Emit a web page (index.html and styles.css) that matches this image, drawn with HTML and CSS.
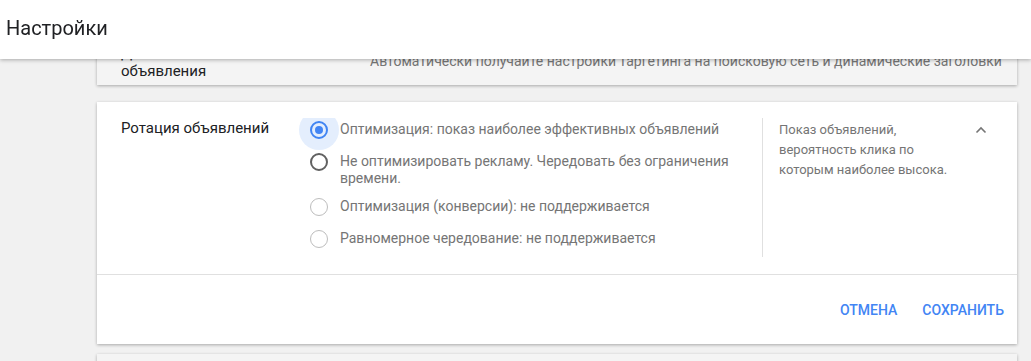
FILE: index.html
```html
<!DOCTYPE html>
<html lang="ru">
<head>
<meta charset="utf-8">
<title>Настройки</title>
<link rel="stylesheet" href="styles.css">
</head>
<body>
<header class="topbar">
  <h1 class="topbar-title">Настройки</h1>
</header>
<main class="page">
  <section class="card card-collapsed">
    <div class="collapsed-label">Динамические поисковые<br>объявления</div>
    <div class="collapsed-summary">Автоматически получайте настройки таргетинга на поисковую сеть и динамические заголовки</div>
  </section>

  <section class="card card-open">
    <div class="card-body">
      <div class="setting-label">Ротация объявлений</div>
      <div class="options">
        <label class="option">
          <span class="radio radio-checked"><span class="halo"></span><span class="dot"></span></span>
          <span class="option-text">Оптимизация: показ наиболее эффективных объявлений</span>
        </label>
        <label class="option option-multi">
          <span class="radio radio-empty"></span>
          <span class="option-text">Не оптимизировать рекламу. Чередовать без ограничения времени.</span>
        </label>
        <label class="option">
          <span class="radio radio-disabled"></span>
          <span class="option-text">Оптимизация (конверсии): не поддерживается</span>
        </label>
        <label class="option">
          <span class="radio radio-disabled"></span>
          <span class="option-text">Равномерное чередование: не поддерживается</span>
        </label>
      </div>
      <div class="help">Показ объявлений, вероятность клика по которым наиболее высока.</div>
      <button class="collapse-btn" aria-label="Свернуть">
        <svg width="24" height="24" viewBox="0 0 24 24"><polyline points="7.5,14.5 12,10 16.5,14.5" fill="none" stroke="#757575" stroke-width="1.6"/></svg>
      </button>
    </div>
    <div class="card-footer">
      <button class="text-btn">Отмена</button>
      <button class="text-btn">Сохранить</button>
    </div>
  </section>

  <section class="card card-collapsed card-next"></section>
</main>
</body>
</html>
```

FILE: styles.css
```css
html, body {
  margin: 0;
  padding: 0;
}
body {
  background: #f1f1f1;
  font-family: Roboto, "Noto Sans", Arial, sans-serif;
  overflow: hidden;
  width: 1031px;
  height: 361px;
}
.topbar {
  position: fixed;
  top: 0;
  left: 0;
  right: 0;
  height: 59px;
  box-sizing: border-box;
  background: #fff;
  box-shadow: 0 1px 4px rgba(0,0,0,0.3);
  padding: 16px 6px 0;
  z-index: 10;
}
.topbar-title {
  margin: 0;
  font-size: 20px;
  line-height: 24px;
  font-weight: 400;
  color: #202124;
}
.page {
  padding: 25px 0 0 97px;
  width: 920px;
}
.card {
  background: #fff;
  box-shadow: 0 1px 3px rgba(0,0,0,0.3);
}
.card-collapsed {
  background: #f4f4f4;
  display: flex;
  height: 60px;
  box-sizing: border-box;
  padding: 19px 24px 0;
}
.collapsed-label {
  width: 249px;
  flex: none;
  font-size: 15px;
  line-height: 18px;
  color: #202124;
}
.collapsed-summary {
  padding-top: 7px;
  font-size: 14px;
  line-height: 20px;
  color: #757575;
  white-space: nowrap;
}
.card-open {
  margin-top: 17px;
}
.card-body {
  display: flex;
  align-items: stretch;
  padding: 16px 24px 17px;
}
.setting-label {
  width: 189px;
  flex: none;
  font-size: 15px;
  line-height: 20px;
  color: #202124;
}
.options {
  width: 452px;
  flex: none;
  padding: 3px 0 10px;
  display: flex;
  flex-direction: column;
  gap: 15px;
  clip-path: inset(0 -40px -40px -40px);
}
.option {
  display: flex;
  gap: 12px;
  font-size: 14px;
  line-height: 17px;
  color: #757575;
}
.option-multi {
  margin-bottom: -4px;
}
.radio {
  position: relative;
  flex: none;
  width: 18px;
  height: 18px;
  box-sizing: border-box;
  border-radius: 50%;
  margin: -0.5px 0 -1.5px;
  border: 2px solid #616161;
}
.radio-checked {
  border-color: #4285f4;
}
.radio-disabled {
  border: 1.7px solid #bdbdbd;
}
.halo {
  position: absolute;
  left: 50%;
  top: 50%;
  width: 40px;
  height: 40px;
  margin: -20px 0 0 -20px;
  border-radius: 50%;
  background: rgba(66,133,244,0.14);
}
.dot {
  position: absolute;
  left: 3px;
  top: 3px;
  width: 8px;
  height: 8px;
  border-radius: 50%;
  background: #4285f4;
}
.help {
  width: 176px;
  flex: none;
  border-left: 1px solid #e0e0e0;
  padding-left: 16px;
  padding-top: 2px;
  font-size: 13px;
  line-height: 20px;
  color: #757575;
}
.collapse-btn {
  margin-left: auto;
  align-self: flex-start;
  width: 24px;
  height: 24px;
  padding: 0;
  border: 0;
  background: none;
}
.collapse-btn svg {
  display: block;
}
.card-footer {
  border-top: 1px solid #e0e0e0;
  height: 69px;
  display: flex;
  justify-content: flex-end;
  align-items: center;
  gap: 25px;
  padding-right: 13px;
}
.text-btn {
  border: 0;
  background: none;
  padding: 0;
  font-family: Roboto, Arial, sans-serif;
  font-size: 14px;
  font-weight: 500;
  text-transform: uppercase;
  color: #4285f4;
}
.card-next {
  margin-top: 10px;
  height: 40px;
  background: #f4f4f4;
}
```
